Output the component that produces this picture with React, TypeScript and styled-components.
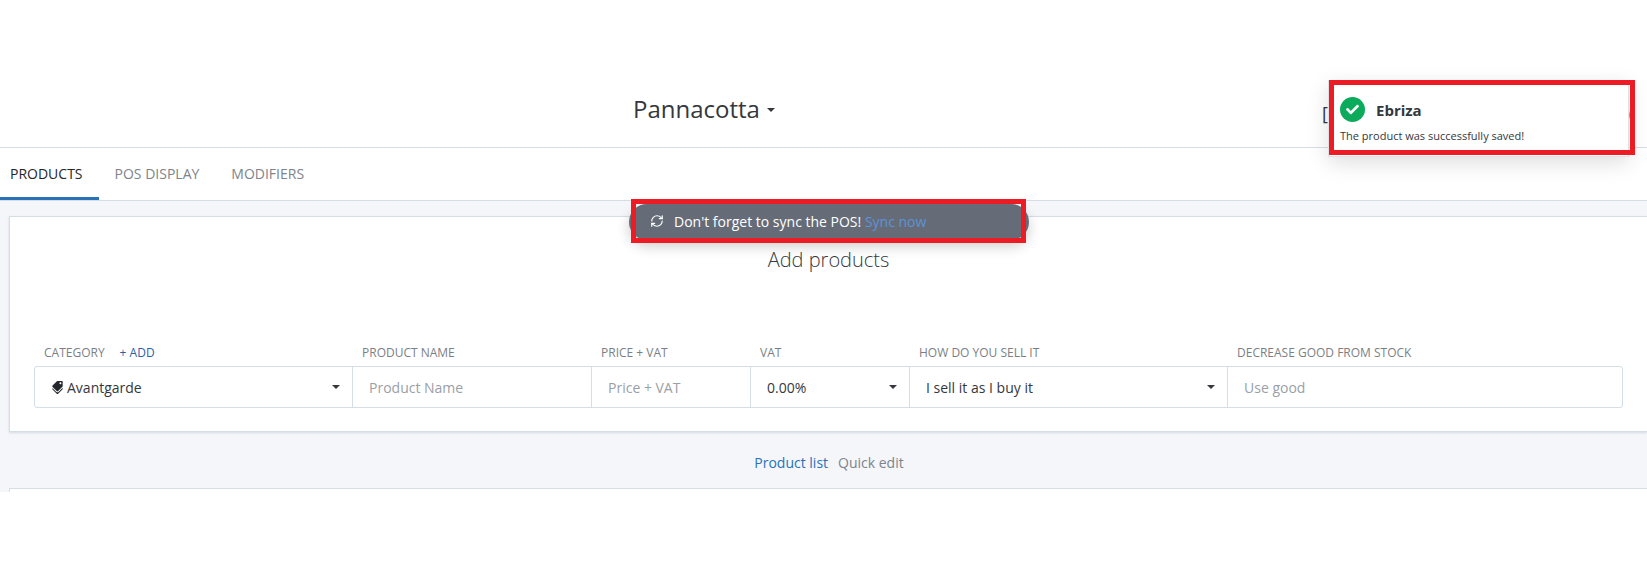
import React from "react";
import styled, { createGlobalStyle } from "styled-components";
import { FaCheck, FaTags } from "react-icons/fa";
import { RefreshCw } from "lucide-react";

type Column = {
  readonly label: string;
  readonly kind: "select" | "input";
  readonly value: string;
  readonly labelAction?: string;
  readonly icon?: boolean;
};

const columns: readonly Column[] = [
  { label: "Category", labelAction: "+ Add", kind: "select", value: "Avantgarde", icon: true },
  { label: "Product name", kind: "input", value: "Product Name" },
  { label: "Price + VAT", kind: "input", value: "Price + VAT" },
  { label: "VAT", kind: "select", value: "0.00%" },
  { label: "How do you sell it", kind: "select", value: "I sell it as I buy it" },
  { label: "Decrease good from stock", kind: "input", value: "Use good" },
];

const gridColumns = "318px 239px 159px 159px 318px 396px";

const GlobalStyle = createGlobalStyle`
  html, body {
    margin: 0;
    padding: 0;
    background: #fff;
    overflow: hidden;
  }

  body {
    font-family: "Open Sans", "Liberation Sans", sans-serif;
    color: #34383d;
  }
`;

const Page = styled.div`
  position: relative;
  width: 1647px;
  height: 564px;
  overflow: hidden;
`;

const Header = styled.header`
  display: flex;
  align-items: flex-end;
  height: 148px;
  padding: 0 17px 22px 633px;
  box-sizing: border-box;
  border-bottom: 1px solid #d3dee5;
`;

const Title = styled.h1`
  display: flex;
  align-items: center;
  gap: 7px;
  margin: 0;
  font-size: 24px;
  line-height: 33px;
  font-weight: 400;
  color: #34383d;
`;

const Caret = styled.span`
  width: 0;
  height: 0;
  margin-top: 3px;
  border-left: 4px solid transparent;
  border-right: 4px solid transparent;
  border-top: 4px solid #34383d;
`;

const HeaderActions = styled.div`
  display: flex;
  justify-content: space-between;
  width: 308px;
  margin-left: auto;
  font-size: 18px;
  line-height: 24px;
  color: #34383d;
`;

const Tabs = styled.nav`
  display: flex;
  height: 52px;
  margin-left: -6px;
  border-bottom: 1px solid #d3dee5;
`;

const Tab = styled.div<{ $active?: boolean }>`
  display: flex;
  align-items: center;
  height: 52px;
  padding: 2px 16px 0;
  box-sizing: border-box;
  font-size: 14px;
  color: ${({ $active }) => ($active ? "#23272b" : "#7e848c")};
  border-bottom: 3px solid ${({ $active }) => ($active ? "#2a71b8" : "transparent")};
`;

const Body = styled.main`
  display: flex;
  flex-direction: column;
  height: 291px;
  padding: 15px 0 0 9px;
  box-sizing: border-box;
  background: #f4f6fa;
`;

const AddPanel = styled.section`
  flex: none;
  height: 216px;
  padding: 29px 24px 0 24px;
  box-sizing: border-box;
  background: #fff;
  border: 1px solid #d3dee5;
  border-right: 0;
  box-shadow: 0 1px 2px rgba(120, 140, 160, 0.25);
`;

const PanelTitle = styled.h2`
  margin: 0 0 61px;
  font-size: 20px;
  line-height: 28px;
  font-weight: 300;
  text-align: center;
  color: #34383d;
`;

const Labels = styled.div`
  display: grid;
  grid-template-columns: ${gridColumns};
  height: 31px;
  margin-top: 1px;
`;

const Label = styled.div`
  display: flex;
  gap: 15px;
  padding: 10px 0 0 10px;
  font-size: 12px;
  line-height: 16px;
  text-transform: uppercase;
  color: #7b7f85;
`;

const LabelAction = styled.span`
  color: #2a5fa8;
`;

const FormRow = styled.div`
  display: grid;
  grid-template-columns: ${gridColumns};
  height: 42px;
  box-sizing: border-box;
  border: 1px solid #d3dee5;
  border-radius: 3px;
`;

const Cell = styled.div<{ $last: boolean }>`
  display: flex;
  align-items: center;
  padding: 0 12px 0 16px;
  box-sizing: border-box;
  font-size: 14px;
  border-right: ${({ $last }) => ($last ? "0" : "1px solid #d3dee5")};
`;

const CellValue = styled.span<{ $placeholder: boolean }>`
  flex: 1;
  display: flex;
  align-items: center;
  gap: 3px;
  color: ${({ $placeholder }) => ($placeholder ? "#9a9fa6" : "#34383d")};
`;

const TagIcon = styled(FaTags)`
  width: 13px;
  height: 13px;
  color: #23272b;
  transform: rotate(90deg);
`;

const SelectCaret = styled.span`
  width: 0;
  height: 0;
  border-left: 4px solid transparent;
  border-right: 4px solid transparent;
  border-top: 4px solid #34383d;
`;

const ListSwitch = styled.div`
  flex: none;
  display: flex;
  justify-content: center;
  gap: 10px;
  height: 56px;
  padding: 21px 0 0 2px;
  box-sizing: border-box;
  font-size: 14px;
  line-height: 20px;
`;

const SwitchLink = styled.span<{ $active?: boolean }>`
  color: ${({ $active }) => ($active ? "#2a71b8" : "#7e848c")};
`;

const ListPanel = styled.section`
  flex: 1;
  background: #fff;
  border-top: 1px solid #d3dee5;
  border-left: 1px solid #d3dee5;
`;

const SyncBar = styled.div`
  position: absolute;
  left: 629px;
  top: 204px;
  display: flex;
  align-items: center;
  gap: 10px;
  width: 400px;
  height: 36px;
  padding: 0 0 2px 21px;
  box-sizing: border-box;
  border-radius: 18px;
  background: #666c77;
  color: #fff;
  font-size: 14px;
  box-shadow: 0 6px 14px rgba(0, 0, 0, 0.2);
`;

const SyncLink = styled.span`
  color: #5b93d8;
`;

const Toast = styled.aside`
  position: absolute;
  left: 1328px;
  top: 80px;
  width: 301px;
  height: 77px;
  padding: 15px 0 0 11px;
  box-sizing: border-box;
  background: #fff;
  border: 1px solid #dce1e6;
  box-shadow: 0 6px 20px rgba(0, 0, 0, 0.13);
`;

const ToastHead = styled.div`
  display: flex;
  align-items: center;
  gap: 11px;
  height: 26px;
`;

const ToastIcon = styled.span`
  display: flex;
  align-items: center;
  justify-content: center;
  width: 25px;
  height: 25px;
  border-radius: 50%;
  background: #0cab5b;
  color: #fff;
  font-size: 13px;
`;

const ToastTitle = styled.div`
  margin-top: 2px;
  font-size: 15px;
  font-weight: 700;
  color: #34383d;
`;

const ToastText = styled.div`
  margin-top: 7px;
  font-size: 11px;
  line-height: 14px;
  color: #34383d;
`;

// red boxes drawn on top of the screenshot
const Highlight = styled.div<{ $left: number; $top: number; $width: number; $height: number }>`
  position: absolute;
  left: ${({ $left }) => $left}px;
  top: ${({ $top }) => $top}px;
  width: ${({ $width }) => $width}px;
  height: ${({ $height }) => $height}px;
  box-sizing: border-box;
  border: 5px solid #ed1c24;
`;

const App = () => {
  return (
    <Page>
      <GlobalStyle />
      <Header>
        <Title>
          Pannacotta
          <Caret />
        </Title>
        <HeaderActions>
          <span>[</span>
          <span>)</span>
        </HeaderActions>
      </Header>
      <Tabs>
        <Tab $active>PRODUCTS</Tab>
        <Tab>POS DISPLAY</Tab>
        <Tab>MODIFIERS</Tab>
      </Tabs>
      <Body>
        <AddPanel>
          <PanelTitle>Add products</PanelTitle>
          <Labels>
            {columns.map((column) => (
              <Label key={column.label}>
                {column.label}
                {column.labelAction && <LabelAction>{column.labelAction}</LabelAction>}
              </Label>
            ))}
          </Labels>
          <FormRow>
            {columns.map((column, index) => (
              <Cell key={column.label} $last={index === columns.length - 1}>
                <CellValue $placeholder={column.kind === "input"}>
                  {column.icon && <TagIcon />}
                  {column.value}
                </CellValue>
                {column.kind === "select" && <SelectCaret />}
              </Cell>
            ))}
          </FormRow>
        </AddPanel>
        <ListSwitch>
          <SwitchLink $active>Product list</SwitchLink>
          <SwitchLink>Quick edit</SwitchLink>
        </ListSwitch>
        <ListPanel />
      </Body>
      <SyncBar>
        <RefreshCw size={14} />
        <span>
          Don't forget to sync the POS! <SyncLink>Sync now</SyncLink>
        </span>
      </SyncBar>
      <Toast>
        <ToastHead>
          <ToastIcon>
            <FaCheck />
          </ToastIcon>
          <ToastTitle>Ebriza</ToastTitle>
        </ToastHead>
        <ToastText>The product was successfully saved!</ToastText>
      </Toast>
      <Highlight $left={631} $top={199} $width={395} $height={44} />
      <Highlight $left={1329} $top={80} $width={306} $height={75} />
    </Page>
  );
};

export default App;
